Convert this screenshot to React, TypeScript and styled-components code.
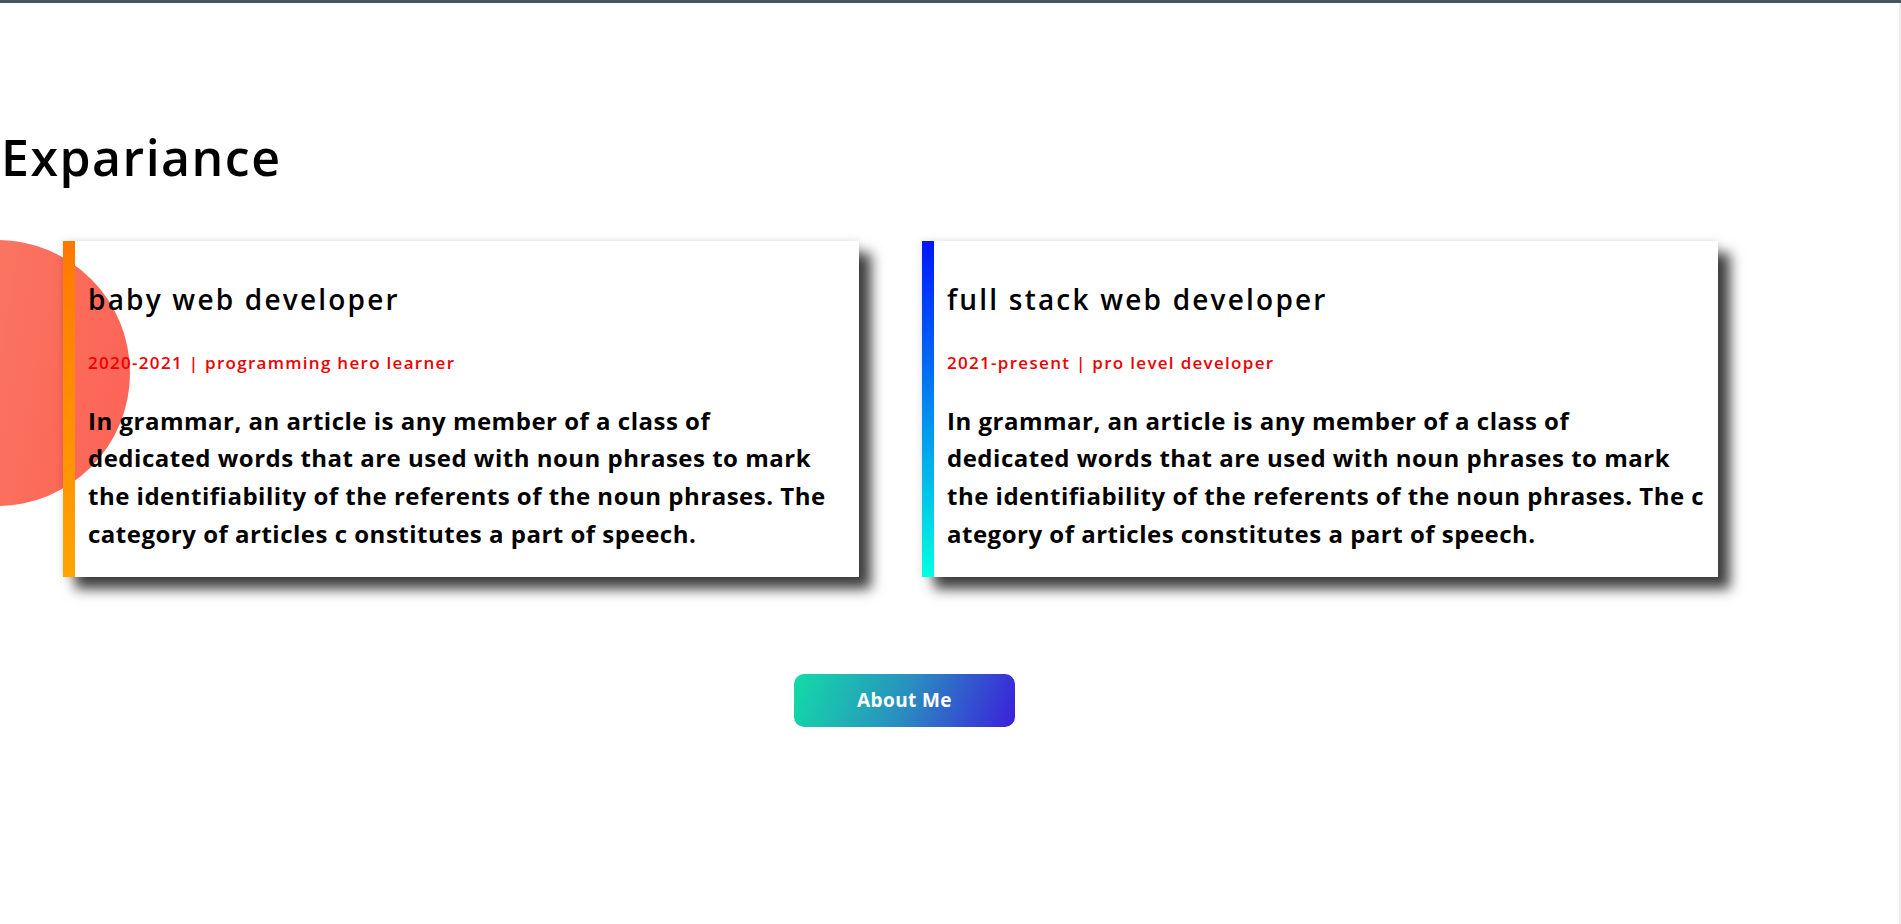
import styled, { createGlobalStyle } from "styled-components"

const GlobalStyle = createGlobalStyle`
    body {
        margin: 0;
        background: #fff;
        font-family: "Open Sans", "Liberation Sans", sans-serif;
        color: #000;
    }
`

const TopBar = styled.div`
    height: 3px;
    background: #46565f;
`

const Page = styled.div`
    min-height: calc(100vh - 3px);
    border-right: 2px solid #ececec;
    box-sizing: border-box;
`

const Section = styled.section`
    position: relative;
    isolation: isolate;
    padding-top: 124px;
`

const Blob = styled.div`
    position: absolute;
    z-index: -1;
    top: 237px;
    left: -136px;
    width: 266px;
    height: 266px;
    border-radius: 50%;
    background: linear-gradient(100deg, #f6866d 0%, #fb6b5a 70%, #fd6357 100%);
`

const Heading = styled.h1`
    margin: 0 0 54px;
    padding-left: 1px;
    font-size: 50px;
    font-weight: 600;
    line-height: 1.2;
    letter-spacing: 1.5px;
`

const CardRow = styled.div`
    display: flex;
    gap: 63px;
    padding-left: 63px;
`

const Card = styled.div<{ $from: string; $to: string }>`
    width: 796px;
    box-sizing: border-box;
    padding: 42px 20px 24px 13px;
    border-left: 12px solid;
    border-image: linear-gradient(to bottom, ${(p) => p.$from}, ${(p) => p.$to}) 1;
    box-shadow: 12px 12px 12px rgba(0, 0, 0, 0.75), 0 0 8px rgba(0, 0, 0, 0.12);
`

const CardTitle = styled.h3`
    margin: 0 0 36.6px;
    font-size: 28px;
    font-weight: 600;
    line-height: 1.2;
    letter-spacing: 2.2px;
`

const Meta = styled.p`
    margin: 0 0 28.2px;
    font-size: 17px;
    font-weight: 600;
    line-height: 1.2;
    color: #ee0000;
    letter-spacing: 1.3px;
`

const Body = styled.p`
    margin: 0;
    font-size: 24px;
    font-weight: 700;
    line-height: 37.7px;
    letter-spacing: 0.5px;
`

const Line = styled.span`
    display: block;
    white-space: nowrap;
`

const ButtonRow = styled.div`
    width: 1809px;
    display: flex;
    justify-content: center;
    margin-top: 97px;
`

const AboutBtn = styled.button`
    width: 221px;
    height: 53px;
    border: none;
    border-radius: 10px;
    background: linear-gradient(110deg, #12dca7 0%, #2a8fc0 50%, #3b1fdb 100%);
    color: #fff;
    font-family: inherit;
    font-size: 19px;
    font-weight: 700;
    letter-spacing: 0.4px;
    cursor: pointer;
`

const jobs = [
    {
        title: "baby web developer",
        meta: "2020-2021 | programming hero learner",
        from: "#ff7800",
        to: "#ffa400",
        lines: [
            "In grammar, an article is any member of a class of",
            "dedicated words that are used with noun phrases to mark",
            "the identifiability of the referents of the noun phrases. The",
            "category of articles c onstitutes a part of speech.",
        ],
    },
    {
        title: "full stack web developer",
        meta: "2021-present | pro level developer",
        from: "#0014ff",
        to: "#00ffe1",
        lines: [
            "In grammar, an article is any member of a class of",
            "dedicated words that are used with noun phrases to mark",
            "the identifiability of the referents of the noun phrases. The c",
            "ategory of articles constitutes a part of speech.",
        ],
    },
]

const App: React.FC = () => {
    return (
        <>
            <GlobalStyle />
            <TopBar />
            <Page>
                <Section id="experience">
                    <Blob />
                    <Heading>Expariance</Heading>
                    <CardRow>
                        {jobs.map((job) => (
                            <Card key={job.title} $from={job.from} $to={job.to}>
                                <CardTitle>{job.title}</CardTitle>
                                <Meta>{job.meta}</Meta>
                                <Body>
                                    {job.lines.map((l) => (
                                        <Line key={l}>{l}</Line>
                                    ))}
                                </Body>
                            </Card>
                        ))}
                    </CardRow>
                    <ButtonRow>
                        <AboutBtn>About Me</AboutBtn>
                    </ButtonRow>
                </Section>
            </Page>
        </>
    )
}

export default App
